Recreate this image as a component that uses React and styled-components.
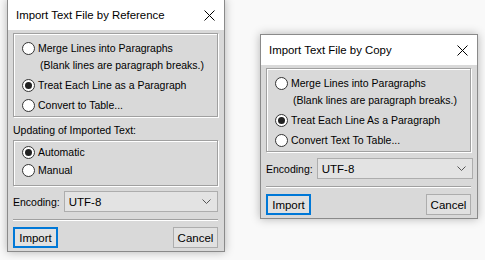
import React from "react";
import styled, { createGlobalStyle } from "styled-components";

const GlobalStyle = createGlobalStyle`
  html, body {
    margin: 0;
    padding: 0;
    background: #f9f9f9;
    width: 485px;
    height: 260px;
    overflow: hidden;
  }
`;

const Desk = styled.div`
  display: flex;
  align-items: flex-start;
  gap: 35px;
  padding-left: 7px;
  font-family: "Liberation Sans", Arial, sans-serif;
  font-size: 10.5px;
  color: #000;
  white-space: nowrap;
`;

const Dialog = styled.div`
  width: 218px;
  box-sizing: border-box;
  margin-top: ${(p) => p.$top}px;
  border: 1px solid #8a8a8a;
  background: #d9d9d9;
  box-shadow: 0 0 9px rgba(0, 0, 0, 0.28);
  display: flex;
  flex-direction: column;
`;

const TitleBar = styled.div`
  height: 30px;
  background: #fff;
  display: flex;
  align-items: center;
  justify-content: space-between;
  padding: 0 9px 0 8px;
  font-size: 11.4px;
`;

const Body = styled.div`
  display: flex;
  flex-direction: column;
  padding: 3px 6px 3px 5px;
`;

const Group = styled.div`
  border: 1px solid #a0a0a0;
  box-shadow: inset 1px 1px 0 #fff, 1px 1px 0 #fff;
  padding: ${(p) => p.$pad};
  display: flex;
  flex-direction: column;
  gap: ${(p) => p.$gap}px;
`;

const Option = styled.label`
  display: flex;
  align-items: flex-start;
  line-height: 17px;
`;

const Radio = styled.span`
  width: 11px;
  height: 11px;
  margin-top: 2px;
  margin-right: 3px;
  border: 1px solid #333;
  border-radius: 50%;
  background: #fff;
  display: flex;
  align-items: center;
  justify-content: center;
  flex-shrink: 0;

  &::after {
    content: "";
    width: 7px;
    height: 7px;
    border-radius: 50%;
    background: ${(p) => (p.$on ? "#222" : "transparent")};
  }
`;

const Sub = styled.div`
  margin-left: 2px;
`;

const Caption = styled.div`
  line-height: 17px;
  margin: 5px 0 1px;
`;

const EncRow = styled.div`
  display: flex;
  align-items: center;
  gap: 4px;
  margin-top: ${(p) => p.$gap}px;
  margin-right: ${(p) => p.$over}px;
`;

const Combo = styled.div`
  flex: 1;
  height: 21px;
  box-sizing: border-box;
  border: 1px solid #adadad;
  background: #e3e3e3;
  display: flex;
  align-items: center;
  justify-content: space-between;
  padding: 0 6px 0 4px;
  font-size: 11.5px;
`;

const Separator = styled.div`
  height: 1px;
  background: #a0a0a0;
  border-bottom: 1px solid #fff;
  margin-top: 7px;
`;

const Buttons = styled.div`
  display: flex;
  justify-content: space-between;
  margin-top: 6px;
`;

const Button = styled.button`
  width: 45px;
  height: 21px;
  box-sizing: border-box;
  margin: 0;
  padding: 0;
  font-family: inherit;
  font-size: 11.5px;
  color: #000;
  background: #e1e1e1;
  border: ${(p) => (p.$primary ? "2px solid #0078d7" : "1px solid #adadad")};
`;

const Close = () => (
  <svg width="11" height="11" viewBox="0 0 11 11">
    <path d="M0.5 0.5 L10.5 10.5 M10.5 0.5 L0.5 10.5" stroke="#000" strokeWidth="1" />
  </svg>
);

const Chevron = () => (
  <svg width="9" height="5" viewBox="0 0 9 5">
    <path d="M0.5 0.5 L4.5 4.5 L8.5 0.5" stroke="#555" strokeWidth="1" fill="none" />
  </svg>
);

const Choice = ({ on, children, sub }) => (
  <Option>
    <Radio $on={on} />
    <div>
      {children}
      {sub && <Sub>{sub}</Sub>}
    </div>
  </Option>
);

const Footer = ({ over, gap }) => (
  <>
    <EncRow $gap={gap} $over={over}>
      Encoding:
      <Combo>
        UTF-8
        <Chevron />
      </Combo>
    </EncRow>
    <Separator />
    <Buttons>
      <Button $primary>Import</Button>
      <Button>Cancel</Button>
    </Buttons>
  </>
);

export default function App() {
  return (
    <>
      <GlobalStyle />
      <Desk>
        <Dialog $top={-1}>
          <TitleBar>
            Import Text File by Reference
            <Close />
          </TitleBar>
          <Body>
            <Group $pad="6px 0 2px 8px" $gap={3}>
              <Choice sub="(Blank lines are paragraph breaks.)">Merge Lines into Paragraphs</Choice>
              <Choice on>Treat Each Line as a Paragraph</Choice>
              <Choice>Convert to Table...</Choice>
            </Group>
            <Caption>Updating of Imported Text:</Caption>
            <Group $pad="3px 0 6px 8px" $gap={1}>
              <Choice on>Automatic</Choice>
              <Choice>Manual</Choice>
            </Group>
            <Footer gap={5} over={0} />
          </Body>
        </Dialog>
        <Dialog $top={34}>
          <TitleBar>
            Import Text File by Copy
            <Close />
          </TitleBar>
          <Body>
            <Group $pad="6px 0 2px 8px" $gap={3}>
              <Choice sub="(Blank lines are paragraph breaks.)">Merge Lines into Paragraphs</Choice>
              <Choice on>Treat Each Line As a Paragraph</Choice>
              <Choice>Convert Text To Table...</Choice>
            </Group>
            <Footer gap={6} over={-2} />
          </Body>
        </Dialog>
      </Desk>
    </>
  );
}
